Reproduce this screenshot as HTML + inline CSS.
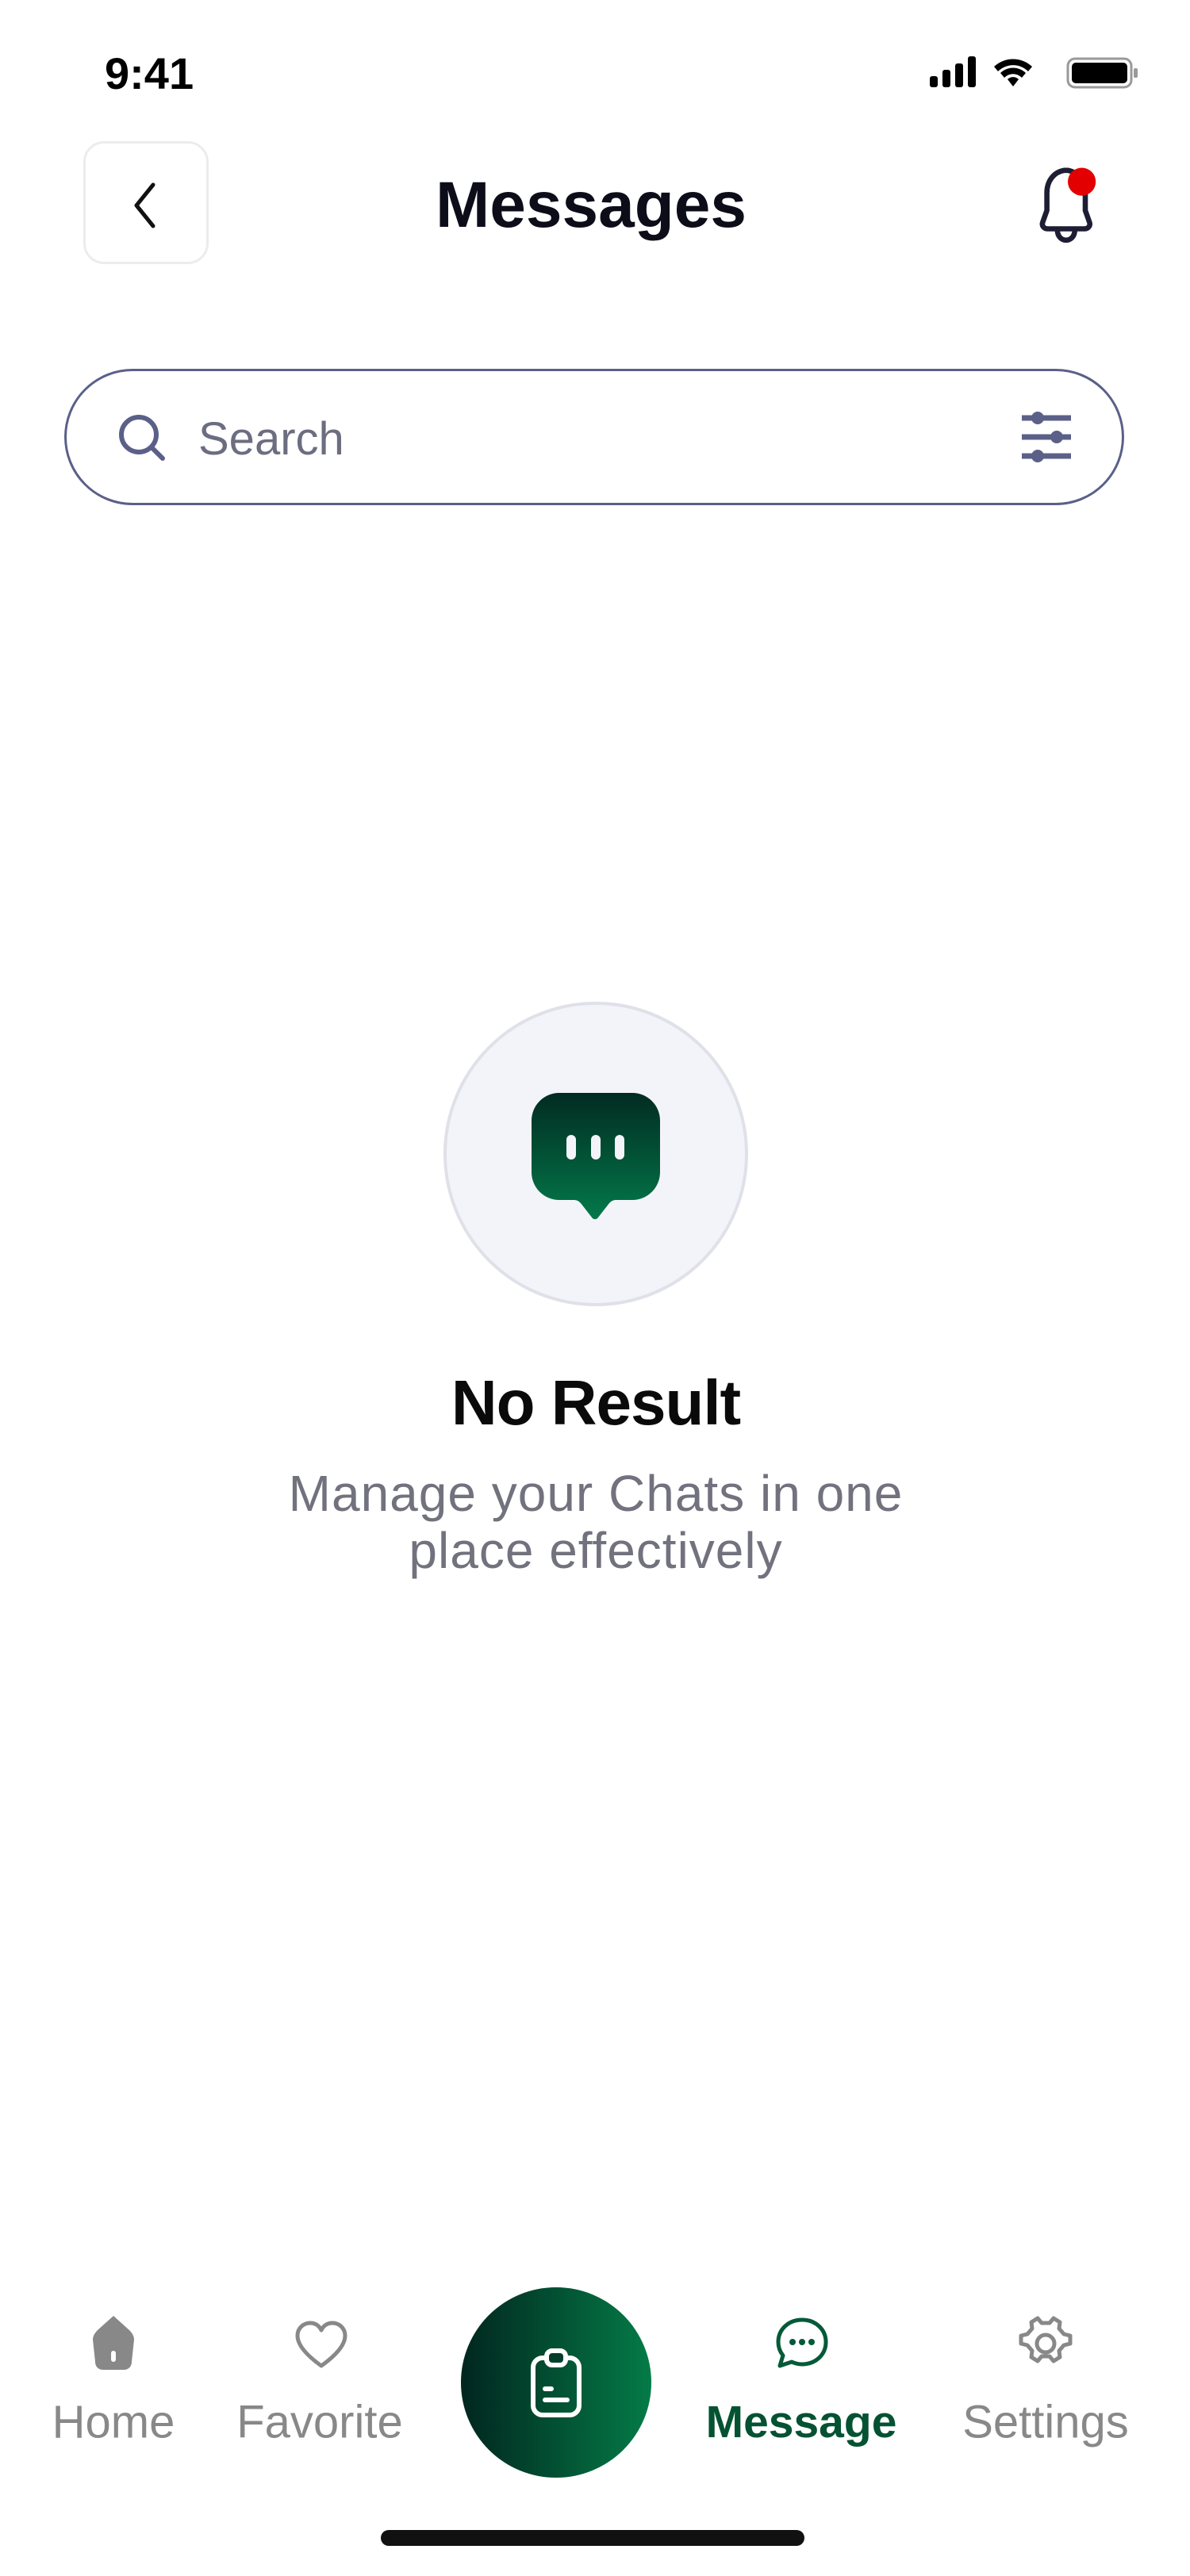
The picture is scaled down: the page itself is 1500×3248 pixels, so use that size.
<!DOCTYPE html>
<html><head><meta charset="utf-8"><style>
*{margin:0;padding:0;box-sizing:border-box}
body{width:1500px;height:3248px;background:#fff;position:relative;overflow:hidden;font-family:"Liberation Sans",sans-serif}
.a{position:absolute}
.c{transform:translate(-50%,-50%);white-space:nowrap}
</style></head><body>
<div class="a" style="left:132px;top:60px;font-size:56px;font-weight:600;color:#000">9:41</div>
<svg class="a" style="left:1168px;top:68px" width="270" height="46" viewBox="0 0 270 46">
<rect x="4" y="28" width="10" height="14" rx="3"/><rect x="20" y="20" width="10" height="22" rx="3"/><rect x="36" y="12" width="10" height="30" rx="3"/><rect x="52" y="3" width="10" height="39" rx="3"/>
<path d="M85 16a35 35 0 0 1 48 0l-5 6a27 27 0 0 0-38 0z M93 24a23 23 0 0 1 32 0l-5 6a15 15 0 0 0-22 0z M102 32a10 10 0 0 1 14 0l-7 9z"/>
<rect x="178" y="6" width="80" height="36" rx="9" fill="none" stroke="#999" stroke-width="3"/><rect x="183" y="11" width="70" height="26" rx="5"/><rect x="261" y="18" width="5" height="12" rx="2" fill="#999"/>
</svg>
<div class="a" style="left:105px;top:178px;width:158px;height:155px;border:3px solid #ececec;border-radius:26px"></div>
<svg class="a" style="left:160px;top:225px" width="50" height="70" viewBox="0 0 50 70"><path d="M33 8L12 34l21 26" fill="none" stroke="#111" stroke-width="5" stroke-linecap="round" stroke-linejoin="round"/></svg>
<div class="a c" style="left:745px;top:259px;font-size:82px;font-weight:700;color:#0d0d1a;letter-spacing:0px">Messages</div>
<svg class="a" style="left:1296px;top:206px" width="100" height="110" viewBox="0 0 90 100"><path d="M41 8c-12 2-20 12-20 26v20l-5 14c-1 4 2 7 6 7h42c4 0 7-3 6-7l-5-14V34c0-14-9-24-20-26z M33 76c0 8 5 12 10 12s10-4 10-12" fill="none" stroke="#1d1e33" stroke-width="6" stroke-linejoin="round"/><circle cx="61" cy="21" r="16" fill="#e30000"/></svg>
<div class="a" style="left:81px;top:465px;width:1336px;height:172px;border:3px solid #5a6088;border-radius:86px"></div>
<svg class="a" style="left:145px;top:518px" width="70" height="70" viewBox="0 0 70 70"><circle cx="30" cy="30" r="22" fill="none" stroke="#5a6088" stroke-width="6"/><path d="M46 46l14 14" stroke="#5a6088" stroke-width="6" stroke-linecap="round"/></svg>
<div class="a" style="left:250px;top:520px;font-size:58px;color:#6b6e80">Search</div>
<svg class="a" style="left:1286px;top:515px" width="66" height="72" viewBox="0 0 66 72"><g stroke="#5a6088" stroke-width="7"><path d="M2 12h62M2 36h62M2 60h62"/></g><g fill="#5a6088"><circle cx="22" cy="12" r="8"/><circle cx="46" cy="36" r="8"/><circle cx="22" cy="60" r="8"/></g></svg>
<div class="a" style="left:559px;top:1263px;width:384px;height:384px;border-radius:50%;background:#f3f4f9;border:4px solid #e0e1e8"></div>
<svg class="a" style="left:670px;top:1378px" width="162" height="160" viewBox="0 0 162 160"><defs><linearGradient id="g" x1="0" y1="0" x2="0" y2="1"><stop offset="0" stop-color="#022b22"/><stop offset="1" stop-color="#03794a"/></linearGradient></defs><path d="M35 0h92a35 35 0 0 1 35 35v65a35 35 0 0 1-35 35h-20c-4 0-6 1-9 4l-14 18c-2 3-6 3-8 0l-14-18c-3-3-5-4-9-4H35A35 35 0 0 1 0 100V35A35 35 0 0 1 35 0z" fill="url(#g)"/><g fill="#f3f4f9"><rect x="44" y="53" width="12" height="31" rx="6"/><rect x="75" y="53" width="12" height="31" rx="6"/><rect x="105" y="53" width="12" height="31" rx="6"/></g></svg>
<div class="a c" style="left:751px;top:1769px;font-size:80px;font-weight:700;color:#0a0a0a;letter-spacing:-1px">No Result</div>
<div class="a c" style="left:751px;top:1883px;font-size:64px;color:#72727e;letter-spacing:1px">Manage your Chats in one</div>
<div class="a c" style="left:751px;top:1955px;font-size:64px;color:#72727e;letter-spacing:1px">place effectively</div>
<svg class="a" style="left:110px;top:2918px" width="66" height="72" viewBox="0 0 66 72"><path d="M33 2l-20 18c-4 4-6 8-6 12l3 28c0 6 4 10 10 10h26c6 0 10-4 10-10l3-28c0-4-2-8-6-12z" fill="#888"/><rect x="30" y="46" width="6" height="14" rx="3" fill="#fff"/></svg>
<div class="a c" style="left:143px;top:3054px;font-size:58px;color:#888">Home</div>
<svg class="a" style="left:370px;top:2925px" width="70" height="64" viewBox="0 0 70 64"><path d="M35 58C10 40 5 28 5 20 5 10 13 4 21 4c6 0 11 3 14 9 3-6 8-9 14-9 8 0 16 6 16 16 0 8-5 20-30 38z" fill="none" stroke="#888" stroke-width="5" stroke-linejoin="round"/></svg>
<div class="a c" style="left:403px;top:3054px;font-size:58px;color:#888">Favorite</div>
<div class="a" style="left:581px;top:2884px;width:240px;height:240px;border-radius:50%;background:linear-gradient(90deg,#01261f,#047b47)"></div>
<svg class="a" style="left:661px;top:2960px" width="80" height="90" viewBox="0 0 80 90"><rect x="11" y="13" width="58" height="72" rx="12" fill="none" stroke="#fff" stroke-width="6"/><rect x="28" y="4" width="24" height="18" rx="7" fill="#033e2c" stroke="#fff" stroke-width="6"/><path d="M26 52h8M26 66h28" stroke="#fff" stroke-width="6" stroke-linecap="round"/></svg>
<svg class="a" style="left:977px;top:2921px" width="68" height="72" viewBox="0 0 68 72"><path d="M34 4c17 0 30 12 30 28s-13 28-30 28c-5 0-9-1-13-3L6 62l4-13C6 44 4 38 4 32 4 16 17 4 34 4z" fill="none" stroke="#045a39" stroke-width="5" stroke-linejoin="round"/><g fill="#045a39"><circle cx="22" cy="32" r="4"/><circle cx="34" cy="32" r="4"/><circle cx="46" cy="32" r="4"/></g></svg>
<div class="a c" style="left:1010px;top:3054px;font-size:57px;font-weight:700;color:#045232">Message</div>
<svg class="a" style="left:1282px;top:2918px" width="72" height="74" viewBox="0 0 72 74"><path d="M26 5l5 6h10l5-6 8 5-1 8 6 7 8 2v10l-8 2-6 7 1 8-8 5-5-6H31l-5 6-8-5 1-8-6-7-8-2V27l8-2 6-7-1-8z" fill="none" stroke="#888" stroke-width="5" stroke-linejoin="round"/><circle cx="36" cy="37" r="11" fill="none" stroke="#888" stroke-width="5"/></svg>
<div class="a c" style="left:1318px;top:3054px;font-size:58px;color:#888">Settings</div>
<div class="a" style="left:480px;top:3190px;width:534px;height:20px;border-radius:10px;background:#111"></div>
</body></html>
